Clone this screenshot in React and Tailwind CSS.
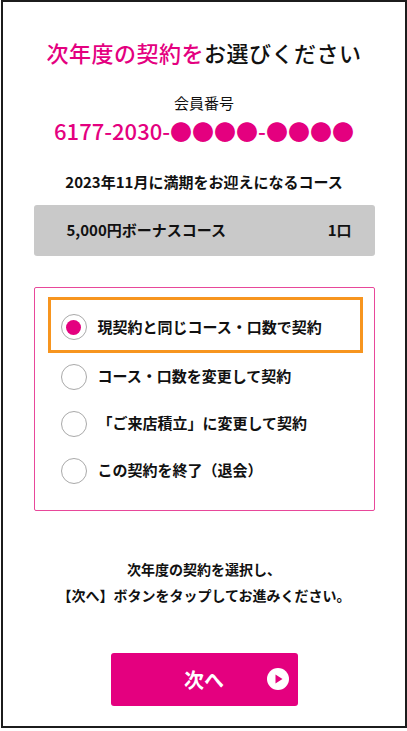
import React, { useState } from "react";

const options = [
  "現契約と同じコース・口数で契約",
  "コース・口数を変更して契約",
  "「ご来店積立」に変更して契約",
  "この契約を終了（退会）",
];

function Radio({ checked }) {
  return (
    <span className="flex h-[26px] w-[26px] shrink-0 items-center justify-center rounded-full border border-[#a9a9a9] bg-white">
      {checked ? <span className="h-[15px] w-[15px] rounded-full bg-[#e4007f]" /> : null}
    </span>
  );
}

export default function App() {
  const [selected, setSelected] = useState(0);

  return (
    <div className="h-[731px] w-[407px] bg-white pl-[1px] text-[#111]" style={{ fontFamily: '"Noto Sans CJK JP", "Noto Sans", sans-serif' }}>
      <div className="flex h-[728px] w-[406px] flex-col items-center border-2 border-[#1c1c1c]">
        <h1 className="pt-[34px] text-[22px] font-medium leading-[32px] tracking-[0.5px]">
          <span className="text-[#e4007f]">次年度の契約を</span>お選びください
        </h1>

        <p className="mt-[25px] text-[15px] leading-[20px]">会員番号</p>
        <p className="mt-[3px] text-[22px] font-medium leading-[28px] text-[#e4007f]">6177-2030-●●●●-●●●●</p>

        <p className="mt-[27px] text-[15px] font-bold leading-[22px]">2023年11月に満期をお迎えになるコース</p>

        <div className="mt-[12px] flex h-[51px] w-[341px] items-center justify-between rounded-[3px] bg-[#c9c9c9] pl-[33px] pr-[23px] text-[15px] font-bold">
          <span>5,000円ボーナスコース</span>
          <span>1口</span>
        </div>

        <div className="mt-[31px] flex h-[224px] w-[341px] flex-col rounded-[2px] border border-[#e8489a] pt-[9px]">
          {options.map((label, i) => (
            <button
              key={label}
              type="button"
              onClick={() => setSelected(i)}
              className={
                "ml-[13px] flex w-[315px] items-center gap-[11px] text-left text-[15px] font-bold " +
                (selected === i ? "h-[56px] border-[3px] border-[#f7951f] pl-[10px] pt-[4px]" : "h-[47px] border-[3px] border-transparent pl-[10px]")
              }
            >
              <Radio checked={selected === i} />
              <span>{label}</span>
            </button>
          ))}
        </div>

        <div className="mt-[45px] text-center text-[14px] font-bold leading-[26px]">
          <p>次年度の契約を選択し、</p>
          <p>【次へ】ボタンをタップしてお進みください。</p>
        </div>

        <button type="button" className="relative mt-[45px] flex h-[53px] w-[187px] items-center justify-center rounded-[3px] bg-[#e4007f] text-[20px] font-bold text-white">
          次へ
          <svg className="absolute right-[9px] top-[15px]" width="22" height="22" viewBox="0 0 22 22">
            <circle cx="11" cy="11" r="11" fill="#fff" />
            <path d="M8.5 6.5 L15.5 11 L8.5 15.5 Z" fill="#e4007f" />
          </svg>
        </button>
      </div>
    </div>
  );
}
